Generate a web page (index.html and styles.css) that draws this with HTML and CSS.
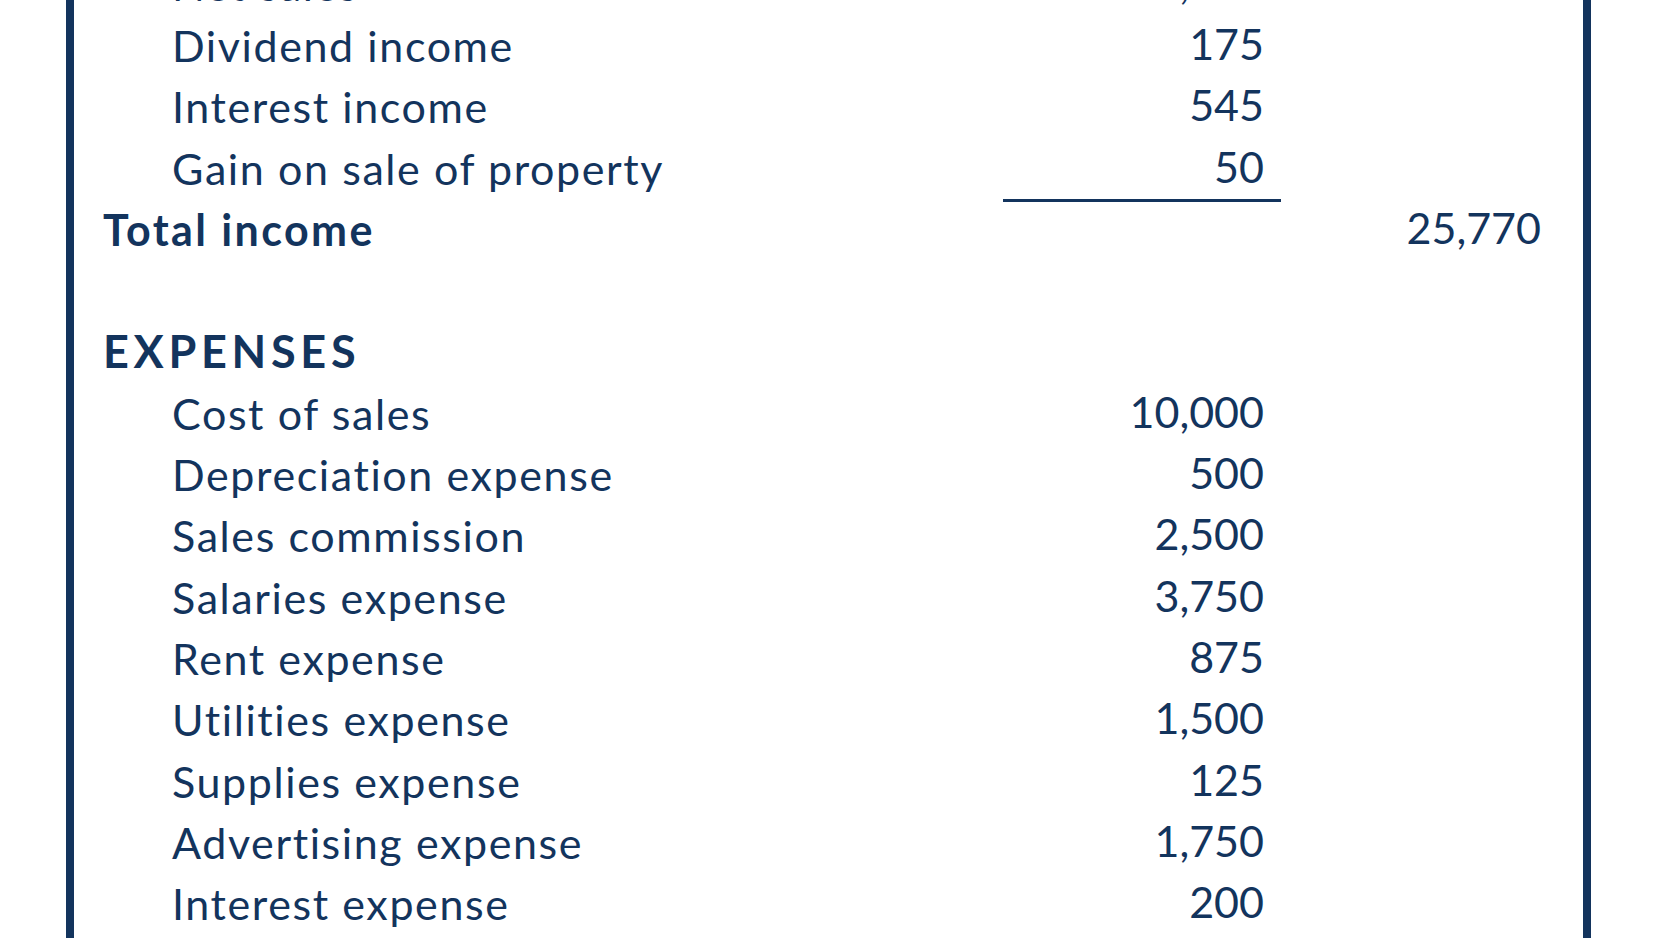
FILE: index.html
```html
<!DOCTYPE html>
<html lang="en">
<head>
<meta charset="utf-8">
<title>Income Statement</title>
<link rel="stylesheet" href="styles.css">
</head>
<body>
<div class="sheet">
  <div class="row"><span class="label sub">Net sales</span><span class="num">25,000</span><span class="num"></span></div>
  <div class="row"><span class="label sub">Dividend income</span><span class="num">175</span><span class="num"></span></div>
  <div class="row"><span class="label sub">Interest income</span><span class="num">545</span><span class="num"></span></div>
  <div class="row"><span class="label sub">Gain on sale of property</span><span class="num rule">50</span><span class="num"></span></div>
  <div class="row"><span class="label strong">Total income</span><span class="num"></span><span class="num total">25,770</span></div>
  <div class="row"><span class="label"></span><span class="num"></span><span class="num"></span></div>
  <div class="row"><span class="label strong heading">EXPENSES</span><span class="num"></span><span class="num"></span></div>
  <div class="row"><span class="label sub">Cost of sales</span><span class="num">10,000</span><span class="num"></span></div>
  <div class="row"><span class="label sub">Depreciation expense</span><span class="num">500</span><span class="num"></span></div>
  <div class="row"><span class="label sub">Sales commission</span><span class="num">2,500</span><span class="num"></span></div>
  <div class="row"><span class="label sub">Salaries expense</span><span class="num">3,750</span><span class="num"></span></div>
  <div class="row"><span class="label sub">Rent expense</span><span class="num">875</span><span class="num"></span></div>
  <div class="row"><span class="label sub">Utilities expense</span><span class="num">1,500</span><span class="num"></span></div>
  <div class="row"><span class="label sub">Supplies expense</span><span class="num">125</span><span class="num"></span></div>
  <div class="row"><span class="label sub">Advertising expense</span><span class="num">1,750</span><span class="num"></span></div>
  <div class="row"><span class="label sub">Interest expense</span><span class="num">200</span><span class="num"></span></div>
</div>
</body>
</html>
```

FILE: styles.css
```css
html, body {
  margin: 0;
  padding: 0;
  background: #ffffff;
  overflow: hidden;
}

body {
  height: 938px;
  font-family: "Lato", "Open Sans", sans-serif;
  color: #13345d;
}

.sheet {
  margin: -46.3px 0 0 66px;
  width: 1480px;
  border-left: 8px solid #13345d;
  border-right: 8px solid #13345d;
  padding: 0 0 80px 29px;
  box-sizing: content-box;
}

.row {
  display: grid;
  grid-template-columns: 1fr 278px 302px;
  height: 61.3px;
  align-items: center;
  font-size: 43px;
  line-height: 61.3px;
}

.label {
  white-space: nowrap;
  letter-spacing: 1.6px;
}

.label.sub {
  padding-left: 69px;
}

.label.strong {
  font-weight: 700;
  letter-spacing: 2.4px;
}

.label.heading {
  font-size: 45px;
  letter-spacing: 4.7px;
}

.num {
  text-align: right;
  white-space: nowrap;
  padding-right: 17px;
  padding-bottom: 4px;
  height: 61.3px;
  line-height: 57.3px;
  box-sizing: border-box;
}

.num.rule {
  border-bottom: 3px solid #13345d;
  height: 64px;
  margin-bottom: -2.7px;
}

.num.total {
  padding-right: 42px;
}
```
